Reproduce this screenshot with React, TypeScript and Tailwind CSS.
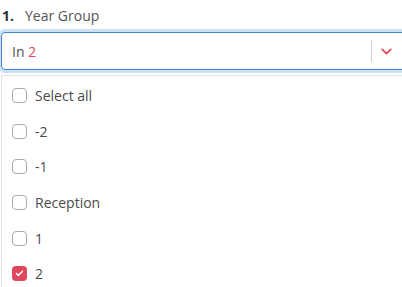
import { Check, ChevronDown } from "lucide-react"

const options = [
  { label: "Select all", checked: false },
  { label: "-2", checked: false },
  { label: "-1", checked: false },
  { label: "Reception", checked: false },
  { label: "1", checked: false },
  { label: "2", checked: true },
]

export default function App() {
  return (
    <div className="w-[402px] h-[287px] overflow-hidden bg-white text-[14px] text-[#444] font-['Open_Sans',sans-serif]">
      <div className="flex items-center h-[32px] pl-[2px] pb-[2px]">
        <span className="font-bold text-[#333] w-[23px]">1.</span>
        <span className="text-[#555]">Year Group</span>
      </div>
      <div className="ml-[1px] w-[410px] h-[38px] rounded-[4px] border border-[#3d85d6] shadow-[0_0_0_3px_rgba(61,133,214,0.25)] flex items-center">
        <div className="flex-1 pl-[10px] text-[#555]">
          In <span className="text-[#e0475d]">2</span>
        </div>
        <div className="w-px h-[22px] bg-[#ccc]" />
        <div className="w-[38px] flex items-center pl-[6px]">
          <ChevronDown className="w-[17px] h-[17px] text-[#e0475d]" strokeWidth={2.5} />
        </div>
      </div>
      <div className="mt-[5px] ml-[1px] w-[420px] border-l border-t border-[#e2e2e2] pt-[2px]">
        {options.map((o) => (
          <div key={o.label} className="flex items-center h-[35.6px] pl-[10px]">
            {o.checked ? (
              <span className="w-[15px] h-[15px] rounded-[4px] bg-[#e0475d] flex items-center justify-center">
                <Check className="w-[9px] h-[9px] text-white" strokeWidth={4} />
              </span>
            ) : (
              <span className="w-[15px] h-[15px] rounded-[4px] border border-[#aaa] bg-white" />
            )}
            <span className="ml-[8px] text-[#4a4a4a]">{o.label}</span>
          </div>
        ))}
      </div>
    </div>
  )
}
